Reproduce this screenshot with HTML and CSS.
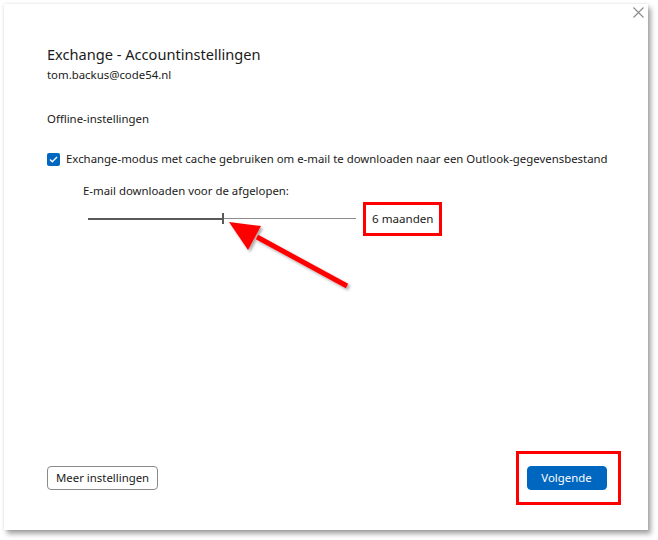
FILE: index.html
```html
<!DOCTYPE html>
<html lang="nl">
<head>
<meta charset="utf-8">
<link rel="stylesheet" href="styles.css">
</head>
<body>
<div class="dialog">
  <div class="close">
    <svg width="11" height="11" viewBox="0 0 11 11"><path d="M0.5 0.5L10.5 10.5M10.5 0.5L0.5 10.5" stroke="#8a8a8a" stroke-width="1.1" fill="none"/></svg>
  </div>
  <div class="content">
    <h1 class="title">Exchange - Accountinstellingen</h1>
    <div class="email">tom.backus@code54.nl</div>
    <div class="section">Offline-instellingen</div>
    <label class="check-row">
      <span class="checkbox">
        <svg width="9" height="7" viewBox="0 0 9 7"><path d="M1 3.6L3.3 5.8L8 1.1" stroke="#fff" stroke-width="1.4" fill="none"/></svg>
      </span>
      <span>Exchange-modus met cache gebruiken om e-mail te downloaden naar een Outlook-gegevensbestand</span>
    </label>
    <div class="sub">
      <div class="sub-label">E-mail downloaden voor de afgelopen:</div>
      <div class="slider-row">
        <div class="slider">
          <div class="fill"></div>
          <div class="thumb"></div>
          <div class="rest"></div>
        </div>
        <div class="value-box">6 maanden</div>
      </div>
    </div>
  </div>
  <div class="footer">
    <button class="btn">Meer instellingen</button>
    <div class="primary-box">
      <button class="btn primary">Volgende</button>
    </div>
  </div>
  <svg class="arrow" width="140" height="80" viewBox="0 0 140 80">
    <defs>
      <filter id="sh" x="-20%" y="-20%" width="140%" height="140%">
        <feDropShadow dx="2" dy="2" stdDeviation="1.5" flood-color="#000" flood-opacity="0.35"/>
      </filter>
    </defs>
    <g filter="url(#sh)">
      <path d="M118 66L28 17" stroke="#ff0000" stroke-width="5" fill="none"/>
      <path d="M0 2L32 6L19 30Z" fill="#ff0000"/>
    </g>
  </svg>
</div>
</body>
</html>
```

FILE: styles.css
```css
* { box-sizing: border-box; }
html, body { margin: 0; padding: 0; background: #ffffff; }
body {
  font-family: "Noto Sans", "Open Sans", "Liberation Sans", sans-serif;
  color: #1a1a1a;
  width: 658px;
  height: 540px;
  overflow: hidden;
}
.dialog {
  position: relative;
  margin: 4px 0 0 4px;
  width: 644px;
  height: 526px;
  background: #fff;
  box-shadow: 0 0 3px rgba(0,0,0,0.12), 3px 4px 5px rgba(0,0,0,0.35);
  display: flex;
  flex-direction: column;
}
.close {
  position: absolute;
  top: 3px;
  right: 4px;
  width: 11px;
  height: 11px;
  display: flex;
}
.content {
  padding: 40px 0 0 43px;
  flex: 1;
}
.title {
  margin: 0;
  font-size: 14.6px;
  font-weight: 400;
  line-height: 20px;
  color: #1b1b1b;
}
.email {
  font-size: 11.4px;
  line-height: 16px;
  margin-top: 3px;
}
.section {
  font-size: 11.4px;
  line-height: 16px;
  margin-top: 28px;
}
.check-row {
  display: flex;
  align-items: center;
  gap: 6px;
  margin-top: 24px;
  font-size: 11.4px;
  line-height: 16px;
}
.checkbox {
  width: 13px;
  height: 13px;
  border-radius: 2px;
  background: #0067c0;
  display: flex;
  align-items: center;
  justify-content: center;
  flex: none;
}
.sub {
  padding-left: 36px;
  margin-top: 16px;
}
.sub-label {
  font-size: 11.4px;
  line-height: 16px;
}
.slider-row {
  display: flex;
  align-items: center;
  margin-top: 3px;
}
.slider {
  display: flex;
  align-items: center;
  width: 268px;
  height: 34px;
  margin-left: 5px;
  padding-bottom: 1px;
}
.fill {
  width: 134px;
  height: 2px;
  background: #5a5a5a;
}
.thumb {
  width: 2px;
  height: 11px;
  background: #5a5a5a;
}
.rest {
  flex: 1;
  height: 1px;
  background: #8c8c8c;
}
.value-box {
  margin-left: 7px;
  width: 79px;
  height: 34px;
  border: 3px solid #ff0000;
  font-size: 11.6px;
  line-height: 16px;
  padding: 6px 0 0 6px;
}
.footer {
  display: flex;
  align-items: center;
  justify-content: space-between;
  padding: 0 27px 25px 43px;
}
.btn {
  font-family: "Noto Sans", "Open Sans", "Liberation Sans", sans-serif;
  font-size: 11.4px;
  height: 24px;
  padding: 0 8px;
  border: 1px solid #8a8a8a;
  border-radius: 4px;
  background: #fff;
  color: #1a1a1a;
  line-height: 20px;
}
.primary-box {
  width: 105px;
  height: 54px;
  border: 3px solid #ff0000;
  display: flex;
  align-items: center;
  justify-content: center;
  padding-right: 4px;
}
.btn.primary {
  width: 80px;
  background: #0067c0;
  border-color: #0067c0;
  color: #fff;
}
.arrow {
  position: absolute;
  left: 225px;
  top: 216px;
}
```
